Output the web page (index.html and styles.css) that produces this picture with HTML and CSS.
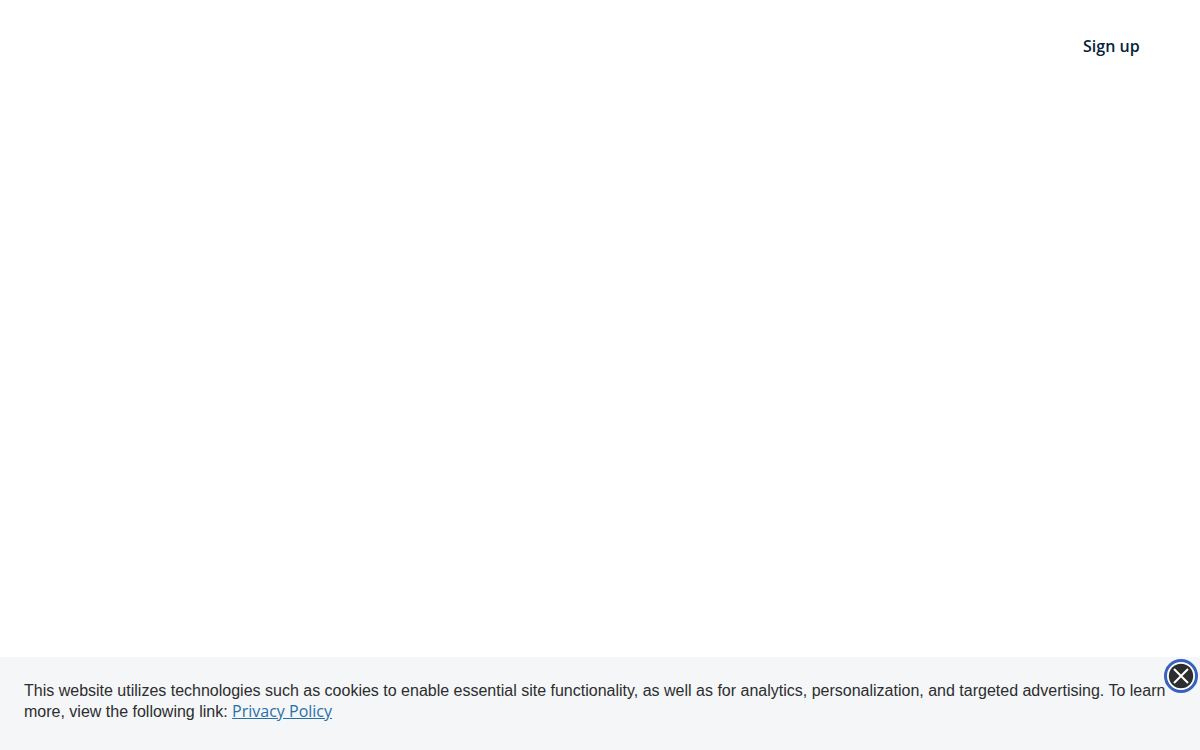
FILE: index.html
```html
<!DOCTYPE html>
<html lang="en">
<head>
<meta charset="utf-8">
<title>Sign up</title>
<link rel="stylesheet" href="styles.css">
</head>
<body>
<header class="header"><a class="signup" href="#">Sign up</a></header>
<main class="content"></main>
<section class="banner">
<p class="notice">This website utilizes technologies such as cookies to enable essential site functionality, as well as for analytics, personalization, and targeted advertising. To learn more, view the following link: <a class="policy" href="#">Privacy Policy</a></p>
<button class="close" aria-label="Close">
<svg class="close-icon" viewBox="0 0 34 34"><circle cx="17" cy="17" r="15.5" fill="#fff" stroke="#3860be" stroke-width="3"/><circle cx="17" cy="17" r="12.2" fill="#2d2d2d"/><path d="M10 10L24 24M24 10L10 24" stroke="#fff" stroke-width="2"/></svg>
</button>
</section>
</body>
</html>
```
FILE: styles.css
```css
body {
  margin: 0;
  height: 750px;
  display: flex;
  flex-direction: column;
  overflow: hidden;
  background: #fff;
}
.header {
  display: flex;
  justify-content: flex-end;
  padding: 34px 60.4px 0 0;
}
.signup {
  font: 600 16px/24px "Open Sans", sans-serif;
  color: #06233a;
  text-decoration: none;
}
.content { flex: 1; }
.banner {
  position: relative;
  box-sizing: border-box;
  height: 93px;
  padding: 23px 24px 0;
  background: #f4f6f8;
}
.notice {
  margin: 0;
  font: 16px/21px "Liberation Sans", Arial, sans-serif;
  color: #2d2d2d;
}
.policy {
  font-family: "Open Sans", sans-serif;
  line-height: 18px;
  color: #2a70a8;
}
.close {
  position: absolute;
  top: 2px;
  right: 2px;
  width: 34px;
  height: 34px;
  padding: 0;
  border: 0;
  background: none;
}
.close-icon { display: block; }
```
